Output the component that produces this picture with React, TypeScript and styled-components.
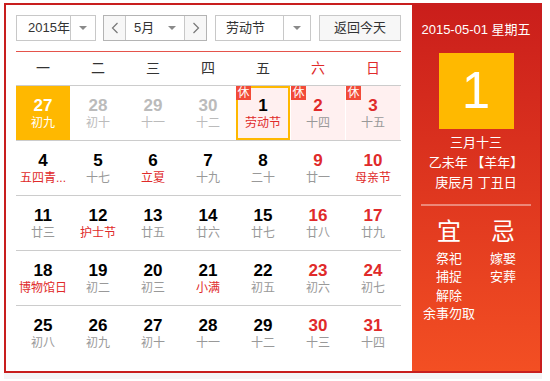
import React from 'react';
import styled, { createGlobalStyle } from 'styled-components';

const GlobalStyle = createGlobalStyle`
  html, body { margin: 0; padding: 0; background: #fff; }
  body { font-family: "Liberation Sans", "Noto Sans CJK SC", sans-serif; }
`;

const CJK = `"Liberation Sans", "Noto Sans CJK SC", sans-serif`;

const Page = styled.div`
  padding: 3px 0 0 4px;
`;

const Frame = styled.div`
  width: 538px;
  height: 370px;
  box-sizing: border-box;
  border: 2px solid #c81e1e;
  display: flex;
`;

const Shade = styled.div`
  width: 538px;
  height: 6px;
  background: #f4f4f6;
`;

const Main = styled.div`
  width: 406px;
  box-sizing: border-box;
  padding: 10px 11px 0 10px;
`;

const Controls = styled.div`
  display: flex;
  height: 26px;
  margin-bottom: 10px;
`;

const SelectBox = styled.div<{ $w: number; $ml?: number; $border?: string }>`
  width: ${p => p.$w}px;
  margin-left: ${p => p.$ml ?? 0}px;
  height: 26px;
  box-sizing: border-box;
  border: 1px solid ${p => p.$border ?? '#c8c8c8'};
  display: flex;
  align-items: center;
  font-family: ${CJK};
  font-size: 13px;
  color: #333;
  background: #fff;
`;

const SelectText = styled.div<{ $pl: number }>`
  flex: 1;
  padding-left: ${p => p.$pl}px;
  line-height: 24px;
  white-space: nowrap;
`;

const ArrowCell = styled.div<{ $w: number; $divider?: boolean }>`
  width: ${p => p.$w}px;
  height: 100%;
  box-sizing: border-box;
  border-left: ${p => (p.$divider ? '1px solid #c8c8c8' : 'none')};
  display: flex;
  align-items: center;
  justify-content: center;
`;

const Triangle = styled.span`
  width: 0;
  height: 0;
  border-left: 4px solid transparent;
  border-right: 4px solid transparent;
  border-top: 4px solid #8a8a8a;
`;

const NavButton = styled.div<{ $side: 'left' | 'right' }>`
  width: 22px;
  height: 100%;
  box-sizing: border-box;
  background: #f7f7f7;
  ${p => (p.$side === 'left' ? 'border-right' : 'border-left')}: 1px solid #c8c8c8;
  display: flex;
  align-items: center;
  justify-content: center;
`;

const TodayButton = styled.div`
  width: 82px;
  margin-left: 8px;
  height: 26px;
  box-sizing: border-box;
  border: 1px solid #c8c8c8;
  background: #f7f7f7;
  font-family: ${CJK};
  font-size: 13px;
  color: #333;
  line-height: 24px;
  text-align: center;
`;

const WeekHeader = styled.div`
  display: grid;
  grid-template-columns: repeat(7, 54px);
  column-gap: 1px;
  height: 33px;
  border-top: 1px solid #e5534b;
  border-bottom: 1px solid #cccccc;
  align-items: center;
`;

const WeekDay = styled.div<{ $red?: boolean }>`
  text-align: center;
  font-family: ${CJK};
  font-size: 14px;
  color: ${p => (p.$red ? '#e02a2a' : '#333')};
  padding-bottom: 4px;
`;

const WeekRow = styled.div`
  display: grid;
  grid-template-columns: repeat(7, 54px);
  column-gap: 1px;
  height: 55px;
  box-sizing: border-box;
  border-bottom: 1px solid #cccccc;
  &:last-child { border-bottom: none; }
`;

type Variant = 'normal' | 'selected' | 'rest' | 'today';

const Cell = styled.div<{ $variant: Variant }>`
  position: relative;
  height: 54px;
  box-sizing: border-box;
  text-align: center;
  padding-top: ${p => (p.$variant === 'today' ? 8 : 10)}px;
  background: ${p =>
    p.$variant === 'selected' ? '#ffb800' : p.$variant === 'rest' || p.$variant === 'today' ? '#fff0f0' : 'transparent'};
  border: ${p => (p.$variant === 'today' ? '2px solid #ffb800' : 'none')};
`;

type Tone = 'black' | 'red' | 'grey' | 'white';
const toneColor: Record<Tone, string> = {
  black: '#000',
  red: '#e02a2a',
  grey: '#bbbbbb',
  white: '#fff',
};

const DayNum = styled.div<{ $tone: Tone }>`
  font-family: "Liberation Sans", Arial, sans-serif;
  font-weight: bold;
  font-size: 17px;
  line-height: 20px;
  color: ${p => toneColor[p.$tone]};
`;

type LTone = 'grey' | 'light' | 'red' | 'white';
const lunarColor: Record<LTone, string> = {
  grey: '#999',
  light: '#bbbbbb',
  red: '#e02a2a',
  white: '#fff',
};

const Lunar = styled.div<{ $tone: LTone }>`
  font-family: ${CJK};
  font-size: 12px;
  line-height: 14px;
  color: ${p => lunarColor[p.$tone]};
  white-space: nowrap;
`;

const RestBadge = styled.span<{ $inset?: boolean }>`
  position: absolute;
  top: ${p => (p.$inset ? -2 : 0)}px;
  left: ${p => (p.$inset ? -2 : 0)}px;
  width: 15px;
  height: 14px;
  background: #f24a38;
  color: #fff;
  font-family: ${CJK};
  font-size: 12px;
  line-height: 14px;
  text-align: center;
`;

const Panel = styled.div`
  width: 128px;
  background: linear-gradient(180deg, #ca1e1b 0%, #f34f23 100%);
  color: #fff;
  display: flex;
  flex-direction: column;
  align-items: center;
  font-family: ${CJK};
  padding-top: 15px;
  box-sizing: border-box;
`;

const DateLine = styled.div`
  font-size: 13px;
  line-height: 20px;
  white-space: nowrap;
`;

const BigDay = styled.div`
  margin-top: 13px;
  width: 75px;
  height: 76px;
  background: #ffb900;
  font-family: "Liberation Sans", Arial, sans-serif;
  font-size: 51px;
  line-height: 76px;
  text-align: center;
  color: #fff;
`;

const LunarInfo = styled.div`
  margin-top: 4px;
  font-size: 13px;
  line-height: 20px;
  text-align: center;
  white-space: pre;
`;

const Divider = styled.div`
  margin-top: 11px;
  width: 110px;
  height: 2px;
  background: rgba(255, 255, 255, 0.4);
`;

const Advice = styled.div`
  margin-top: 11px;
  display: grid;
  grid-template-columns: 54px 54px;
`;

const AdviceCol = styled.div`
  display: flex;
  flex-direction: column;
  align-items: center;
`;

const AdviceHead = styled.div`
  font-size: 24px;
  line-height: 30px;
  margin-bottom: 3px;
`;

const AdviceItem = styled.div`
  font-size: 13px;
  line-height: 18.4px;
  white-space: nowrap;
`;

const Chevron = ({ dir }: { dir: 'left' | 'right' }) => (
  <svg width="8" height="12" viewBox="0 0 8 12">
    <path
      d={dir === 'left' ? 'M6.5 1 L1.5 6 L6.5 11' : 'M1.5 1 L6.5 6 L1.5 11'}
      fill="none"
      stroke="#777"
      strokeWidth="1.2"
    />
  </svg>
);

type Day = {
  n: number;
  l: string;
  v?: Variant;
  tone?: Tone;
  lt?: LTone;
  rest?: boolean;
};

const weeks: Day[][] = [
  [
    { n: 27, l: '初九', v: 'selected', tone: 'white', lt: 'white' },
    { n: 28, l: '初十', tone: 'grey', lt: 'light' },
    { n: 29, l: '十一', tone: 'grey', lt: 'light' },
    { n: 30, l: '十二', tone: 'grey', lt: 'light' },
    { n: 1, l: '劳动节', v: 'today', lt: 'red', rest: true },
    { n: 2, l: '十四', v: 'rest', tone: 'red', rest: true },
    { n: 3, l: '十五', v: 'rest', tone: 'red', rest: true },
  ],
  [
    { n: 4, l: '五四青...', lt: 'red' },
    { n: 5, l: '十七' },
    { n: 6, l: '立夏', lt: 'red' },
    { n: 7, l: '十九' },
    { n: 8, l: '二十' },
    { n: 9, l: '廿一', tone: 'red' },
    { n: 10, l: '母亲节', tone: 'red', lt: 'red' },
  ],
  [
    { n: 11, l: '廿三' },
    { n: 12, l: '护士节', lt: 'red' },
    { n: 13, l: '廿五' },
    { n: 14, l: '廿六' },
    { n: 15, l: '廿七' },
    { n: 16, l: '廿八', tone: 'red' },
    { n: 17, l: '廿九', tone: 'red' },
  ],
  [
    { n: 18, l: '博物馆日', lt: 'red' },
    { n: 19, l: '初二' },
    { n: 20, l: '初三' },
    { n: 21, l: '小满', lt: 'red' },
    { n: 22, l: '初五' },
    { n: 23, l: '初六', tone: 'red' },
    { n: 24, l: '初七', tone: 'red' },
  ],
  [
    { n: 25, l: '初八' },
    { n: 26, l: '初九' },
    { n: 27, l: '初十' },
    { n: 28, l: '十一' },
    { n: 29, l: '十二' },
    { n: 30, l: '十三', tone: 'red' },
    { n: 31, l: '十四', tone: 'red' },
  ],
];

const weekdays = ['一', '二', '三', '四', '五', '六', '日'];

export default function App() {
  return (
    <Page>
      <GlobalStyle />
      <Frame>
        <Main>
          <Controls>
            <SelectBox $w={80}>
              <SelectText $pl={11}>2015年</SelectText>
              <ArrowCell $w={25} $divider>
                <Triangle />
              </ArrowCell>
            </SelectBox>
            <SelectBox $w={104} $ml={7} $border="#b4b4b4">
              <NavButton $side="left">
                <Chevron dir="left" />
              </NavButton>
              <SelectText $pl={8}>5月</SelectText>
              <ArrowCell $w={24}>
                <Triangle />
              </ArrowCell>
              <NavButton $side="right">
                <Chevron dir="right" />
              </NavButton>
            </SelectBox>
            <SelectBox $w={96} $ml={8}>
              <SelectText $pl={10}>劳动节</SelectText>
              <ArrowCell $w={27} $divider>
                <Triangle />
              </ArrowCell>
            </SelectBox>
            <TodayButton>返回今天</TodayButton>
          </Controls>
          <WeekHeader>
            {weekdays.map((w, i) => (
              <WeekDay key={w} $red={i >= 5}>
                {w}
              </WeekDay>
            ))}
          </WeekHeader>
          {weeks.map((week, wi) => (
            <WeekRow key={wi}>
              {week.map((d, di) => (
                <Cell key={di} $variant={d.v ?? 'normal'}>
                  {d.rest && <RestBadge $inset={d.v === 'today'}>休</RestBadge>}
                  <DayNum $tone={d.tone ?? 'black'}>{d.n}</DayNum>
                  <Lunar $tone={d.lt ?? 'grey'}>{d.l}</Lunar>
                </Cell>
              ))}
            </WeekRow>
          ))}
        </Main>
        <Panel>
          <DateLine>2015-05-01 星期五</DateLine>
          <BigDay>1</BigDay>
          <LunarInfo>
            {'三月十三\n乙未年 【羊年】\n庚辰月 丁丑日'}
          </LunarInfo>
          <Divider />
          <Advice>
            <AdviceCol>
              <AdviceHead>宜</AdviceHead>
              <AdviceItem>祭祀</AdviceItem>
              <AdviceItem>捕捉</AdviceItem>
              <AdviceItem>解除</AdviceItem>
              <AdviceItem>余事勿取</AdviceItem>
            </AdviceCol>
            <AdviceCol>
              <AdviceHead>忌</AdviceHead>
              <AdviceItem>嫁娶</AdviceItem>
              <AdviceItem>安葬</AdviceItem>
            </AdviceCol>
          </Advice>
        </Panel>
      </Frame>
      <Shade />
    </Page>
  );
}
